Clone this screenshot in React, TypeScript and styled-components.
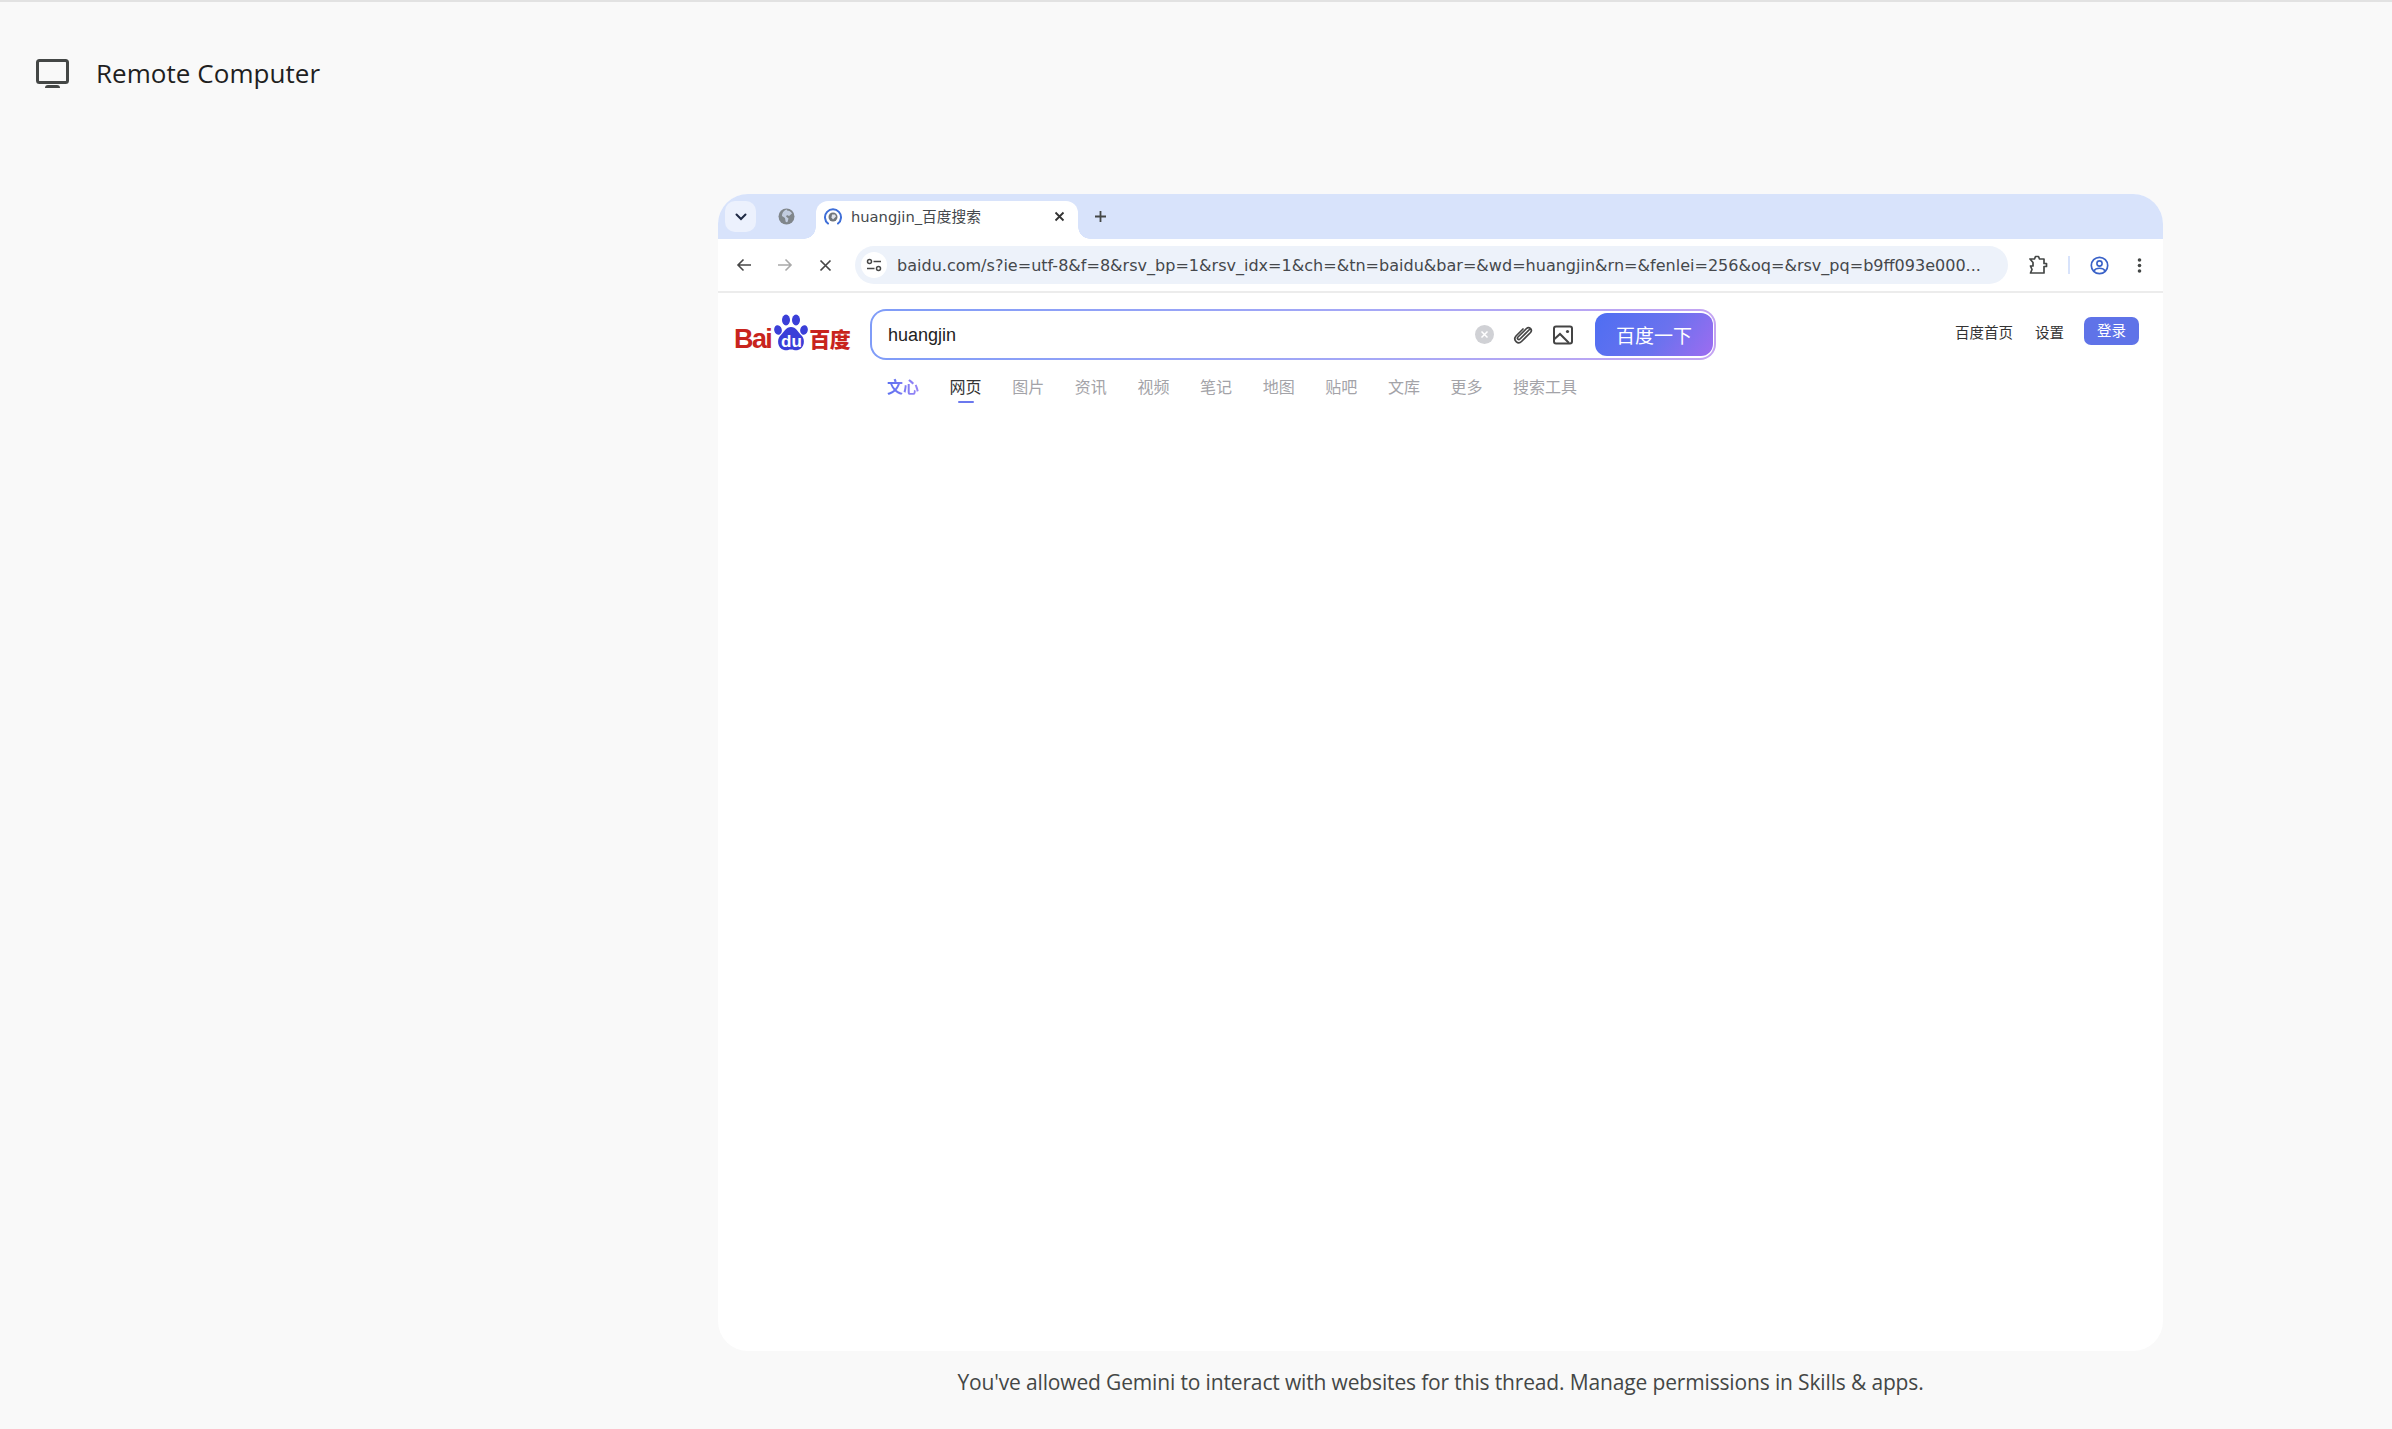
import React from "react";
import styled, { createGlobalStyle } from "styled-components";

const Global = createGlobalStyle`
  html, body { margin: 0; padding: 0; background: #f9f9f9; }
  * { box-sizing: border-box; }
`;

const CJK = `"Noto Sans CJK SC", sans-serif`;

const Page = styled.div`
  width: 2392px;
  height: 1429px;
  overflow: hidden;
  background: #f9f9f9;
  border-top: 2px solid #e2e2e2;
  display: flex;
  flex-direction: column;
`;

const Header = styled.header`
  height: 192px;
  padding: 56px 0 0 36px;
  display: flex;
  align-items: flex-start;
  gap: 27px;
`;

const HeaderIcon = styled.svg`
  width: 33px;
  height: 30px;
  flex: none;
  margin-top: 1px;
`;

const Title = styled.h1`
  margin: 0;
  font: 400 26px/30px "Open Sans", sans-serif;
  letter-spacing: 0.05px;
  color: #1f1f1f;
`;

const Stage = styled.main`
  display: flex;
  flex-direction: column;
  align-items: center;
  width: 1445px;
  margin-left: 718px;
`;

const BrowserWindow = styled.section`
  width: 1445px;
  height: 1157px;
  background: #fff;
  border-radius: 30px;
  overflow: hidden;
  display: flex;
  flex-direction: column;
`;

const TabStrip = styled.div`
  height: 45px;
  flex: none;
  background: #d8e3fb;
  padding: 7px 0 0 7px;
  display: flex;
  align-items: flex-start;
  font: 400 14px/18px "DejaVu Sans", ${CJK};
  color: #45484c;
`;

const TabListButton = styled.div`
  width: 31px;
  height: 31px;
  border-radius: 10px;
  background: #ecf1fd;
  display: flex;
  align-items: center;
  justify-content: center;
`;

const PinnedTab = styled.div`
  width: 60px;
  height: 31px;
  display: flex;
  align-items: center;
  justify-content: center;
`;

const Tab = styled.div`
  width: 262px;
  height: 38px;
  background: #fff;
  border-radius: 12px 12px 0 0;
  display: flex;
  align-items: center;
  padding: 0 0 7px 8px;
  position: relative;
  &::before, &::after {
    content: "";
    position: absolute;
    bottom: 0;
    width: 12px;
    height: 12px;
    background: radial-gradient(circle at var(--cx) 0, #d8e3fb 11.5px, #fff 12px);
  }
  &::before { left: -12px; --cx: 0; }
  &::after { right: -12px; --cx: 100%; }
`;

const TabLabel = styled.span`
  margin-left: 9px;
  width: 203px;
  flex: none;
  white-space: nowrap;
  font-size: 14.7px;
`;

const NewTab = styled.div`
  margin-left: 9px;
  width: 26px;
  height: 31px;
  display: flex;
  align-items: center;
  justify-content: center;
`;

const Toolbar = styled.div`
  height: 54px;
  flex: none;
  background: #fff;
  border-bottom: 2px solid #ececec;
  padding: 7px 0 7px 1px;
  display: flex;
  align-items: center;
  border-radius: 10px 10px 0 0;
`;

const NavButton = styled.div<{ $w: number }>`
  width: ${(p) => p.$w}px;
  height: 38px;
  flex: none;
  display: flex;
  align-items: center;
  justify-content: center;
`;

const Omnibox = styled.div`
  margin-left: 10px;
  width: 1153px;
  height: 38px;
  flex: none;
  border-radius: 19px;
  background: #edf2fa;
  display: flex;
  align-items: center;
  padding-left: 6px;
`;

const SiteChip = styled.div`
  width: 26px;
  height: 26px;
  border-radius: 50%;
  background: #fff;
  flex: none;
  display: flex;
  align-items: center;
  justify-content: center;
`;

const UrlText = styled.span`
  margin: 1px 0 0 10px;
  font: 400 16.05px/20px "DejaVu Sans", sans-serif;
  color: #45484c;
  white-space: nowrap;
`;

const ToolbarDivider = styled.div`
  width: 2px;
  height: 18px;
  background: #d8e3fb;
  flex: none;
`;

const BaiduPage = styled.div`
  flex: 1;
  padding: 16px 0 0 16px;
  display: flex;
  flex-direction: column;
`;

const TopRow = styled.div`
  display: flex;
  align-items: flex-start;
`;

const Logo = styled.div`
  width: 116px;
  height: 40px;
  margin-top: 3px;
  flex: none;
  display: flex;
  align-items: flex-end;
  color: #c8241d;
  position: relative;
`;

const LogoLatin = styled.span`
  font: 700 27px/25px "Liberation Sans", sans-serif;
  letter-spacing: -1.6px;
`;

const Paw = styled.svg`
  width: 36px;
  height: 38px;
  flex: none;
  margin-left: 2px;
`;

const PawText = styled.text`
  font: 700 17px "Liberation Sans", sans-serif;
  fill: #fff;
`;

const LogoCjk = styled.span`
  font: 900 21px/28px ${CJK};
  letter-spacing: -0.5px;
  white-space: nowrap;
`;

const SearchBox = styled.div`
  margin-left: 20px;
  width: 846px;
  height: 51px;
  flex: none;
  border-radius: 16px;
  padding: 2px;
  background: linear-gradient(90deg, #7f9cf8 0%, #a6a8f6 60%, #c4a4f2 100%);
`;

const SearchInner = styled.div`
  height: 100%;
  border-radius: 14px;
  background: #fff;
  display: flex;
  align-items: center;
  padding: 0 1px 0 16px;
`;

const Query = styled.span`
  font: 400 18px/24px "Liberation Sans", sans-serif;
  color: #222;
  width: 588px;
`;

const ClearDot = styled.div`
  width: 19px;
  height: 19px;
  border-radius: 50%;
  background: #d0d1d5;
  flex: none;
  display: flex;
  align-items: center;
  justify-content: center;
`;

const SearchIcon = styled.svg<{ $ml: number }>`
  width: 22px;
  height: 22px;
  flex: none;
  margin-left: ${(p) => p.$ml}px;
`;

const SearchButton = styled.div`
  margin-left: 21px;
  width: 118px;
  height: 43px;
  flex: none;
  border-radius: 12px;
  background: linear-gradient(125deg, #4e6ef2 0%, #6a72ee 55%, #9d6cf0 100%);
  color: #fff;
  font: 400 19px/43px ${CJK};
  text-align: center;
`;

const TopLinks = styled.div`
  margin-left: 239px;
  margin-top: 8px;
  display: flex;
  align-items: flex-start;
  font: 400 14.5px/20px ${CJK};
  color: #333;
`;

const TopLink = styled.span<{ $ml?: number }>`
  margin-left: ${(p) => p.$ml ?? 0}px;
  margin-top: 5px;
  white-space: nowrap;
`;

const LoginButton = styled.div`
  margin-left: 20px;
  width: 55px;
  height: 28px;
  border-radius: 7px;
  background: #5f73e8;
  color: #fff;
  font: 400 14.5px/26px ${CJK};
  text-align: center;
`;

const TabsRow = styled.nav`
  margin: 15px 0 0 153px;
  display: flex;
  gap: 30.6px;
  font: 400 16px/22px ${CJK};
  color: #9a9aa0;
`;

const NavItem = styled.span<{ $active?: boolean }>`
  position: relative;
  white-space: nowrap;
  color: ${(p) => (p.$active ? "#333" : "#a3a3a8")};
  &::after {
    content: "";
    display: ${(p) => (p.$active ? "block" : "none")};
    position: absolute;
    left: 8px;
    right: 8px;
    bottom: -6px;
    height: 2px;
    border-radius: 1px;
    background: #6b78ee;
  }
`;

const AiItem = styled.span`
  font-weight: 700;
  white-space: nowrap;
  background: linear-gradient(90deg, #5a6ff0, #9a86f6);
  -webkit-background-clip: text;
  background-clip: text;
  color: transparent;
`;

const Notice = styled.p`
  margin: 18px 0 0;
  font: 400 21px/26px "Open Sans", sans-serif;
  letter-spacing: -0.15px;
  color: #444746;
  white-space: nowrap;
`;

const tabs = ["图片", "资讯", "视频", "笔记", "地图", "贴吧", "文库", "更多", "搜索工具"];

export default function App() {
  return (
    <Page>
      <Global />
      <Header>
        <HeaderIcon viewBox="0 0 33 30" fill="none">
          <rect x="1.500" y="1.500" width="30" height="22" rx="2" stroke="#444746" strokeWidth="3" />
          <path d="M9 29c0-2 1-3 3-3h9c2 0 3 1 3 3z" fill="#444746" />
        </HeaderIcon>
        <Title>Remote Computer</Title>
      </Header>
      <Stage>
        <BrowserWindow>
          <TabStrip>
            <TabListButton>
              <svg width="12" height="8" viewBox="0 0 12 8" fill="none">
                <path d="M1.500 1.500 6 6l4.500-4.500" stroke="#1f2a44" strokeWidth="2" strokeLinecap="round" />
              </svg>
            </TabListButton>
            <PinnedTab>
              <svg width="17" height="17" viewBox="0 0 17 17">
                <circle cx="8.500" cy="8.500" r="8" fill="#80868b" />
                <path d="M9 2.500c2 0 4 1 5 3l-3 2.500-2-1-1 1.500 2.500 2-1 3.500c-1 .5-2 0-2-1l-.5-3-3-2c0-3 2-6 5-6.500z" fill="#d8e3fb" opacity=".75" />
              </svg>
            </PinnedTab>
            <Tab>
              <svg width="18" height="18" viewBox="0 0 18 18" fill="none" style={{ flex: "none" }}>
                <path d="M4 15.500A8 8 0 1 1 14 15.500" stroke="#3f6fd8" strokeWidth="2" strokeLinecap="round" />
                <circle cx="9" cy="9" r="4.500" fill="#70757a" />
                <path d="M8 6.500h3l1 2-3 3-1.500-2z" fill="#dfe3ea" />
              </svg>
              <TabLabel>huangjin_百度搜索</TabLabel>
              <svg width="11" height="11" viewBox="0 0 11 11" fill="none" style={{ flex: "none" }}>
                <path d="M1.500 1.500l8 8m0-8l-8 8" stroke="#333" strokeWidth="1.800" />
              </svg>
            </Tab>
            <NewTab>
              <svg width="13" height="13" viewBox="0 0 13 13" fill="none">
                <path d="M6.500 1v11M1 6.500h11" stroke="#444746" strokeWidth="1.800" />
              </svg>
            </NewTab>
          </TabStrip>
          <Toolbar>
            <NavButton $w={46}>
              <svg width="16" height="14" viewBox="0 0 16 14" fill="none" style={{ marginLeft: 4 }}>
                <path d="M15 7H2m5.500-5.500L2 7l5.500 5.500" stroke="#474747" strokeWidth="1.600" />
              </svg>
            </NavButton>
            <NavButton $w={40}>
              <svg width="16" height="14" viewBox="0 0 16 14" fill="none">
                <path d="M1 7h13M8.500 1.500 14 7l-5.500 5.500" stroke="#a9a9a9" strokeWidth="1.600" />
              </svg>
            </NavButton>
            <NavButton $w={40}>
              <svg width="13" height="13" viewBox="0 0 13 13" fill="none">
                <path d="M1.500 1.500l10 10m0-10l-10 10" stroke="#474747" strokeWidth="1.700" />
              </svg>
            </NavButton>
            <Omnibox>
              <SiteChip>
                <svg width="16" height="14" viewBox="0 0 16 14" fill="none">
                  <circle cx="3.500" cy="3.500" r="2" stroke="#474747" strokeWidth="1.500" />
                  <path d="M7.500 3.500H15M1 10.500h7.500" stroke="#474747" strokeWidth="1.500" />
                  <circle cx="12.500" cy="10.500" r="2" stroke="#474747" strokeWidth="1.500" />
                </svg>
              </SiteChip>
              <UrlText>baidu.com/s?ie=utf-8&amp;f=8&amp;rsv_bp=1&amp;rsv_idx=1&amp;ch=&amp;tn=baidu&amp;bar=&amp;wd=huangjin&amp;rn=&amp;fenlei=256&amp;oq=&amp;rsv_pq=b9ff093e000...</UrlText>
            </Omnibox>
            <NavButton $w={60}>
              <svg width="20" height="20" viewBox="0 0 20 20" fill="none">
                <path d="M2 4h4.500l1-2.500h3l1 2.500H16v4.500h2.500v3H16V18H2.500l1.500-3.500-1.500-3.500H5V7.500z" stroke="#444746" strokeWidth="1.700" strokeLinejoin="round" />
              </svg>
            </NavButton>
            <ToolbarDivider />
            <NavButton $w={58}>
              <svg width="19" height="19" viewBox="0 0 19 19" fill="none">
                <circle cx="9.500" cy="9.500" r="8.200" stroke="#3a62c8" strokeWidth="1.700" />
                <circle cx="9.500" cy="7.500" r="2.600" stroke="#3a62c8" strokeWidth="1.600" />
                <path d="M3.800 15c1.200-2 3.500-2.800 5.700-2.800s4.500.8 5.700 2.800" stroke="#3a62c8" strokeWidth="1.600" />
              </svg>
            </NavButton>
            <NavButton $w={22}>
              <svg width="5" height="15" viewBox="0 0 5 15">
                <circle cx="2.500" cy="2" r="1.800" fill="#444746" />
                <circle cx="2.500" cy="7.500" r="1.800" fill="#444746" />
                <circle cx="2.500" cy="13" r="1.800" fill="#444746" />
              </svg>
            </NavButton>
          </Toolbar>
          <BaiduPage>
            <TopRow>
              <Logo>
                <LogoLatin>Bai</LogoLatin>
                <Paw viewBox="0 0 36 38">
                  <ellipse cx="5" cy="16" rx="3.800" ry="4.800" fill="#3a3fd8" transform="rotate(-15 5 16)" />
                  <ellipse cx="13" cy="6" rx="4" ry="5.400" fill="#3a3fd8" />
                  <ellipse cx="23" cy="6" rx="4" ry="5.400" fill="#3a3fd8" />
                  <ellipse cx="31" cy="16" rx="3.800" ry="4.800" fill="#3a3fd8" transform="rotate(15 31 16)" />
                  <path d="M18 13c5 0 7 5 11 9 3 3 3 12-4 14-3 .8-4-.5-7-.5s-4 1.300-7 .5c-7-2-7-11-4-14 4-4 6-9 11-9z" fill="#3a3fd8" />
                  <PawText x="8" y="33">du</PawText>
                </Paw>
                <LogoCjk>百度</LogoCjk>
              </Logo>
              <SearchBox>
                <SearchInner>
                  <Query>huangjin</Query>
                  <ClearDot>
                    <svg width="9" height="9" viewBox="0 0 9 9" fill="none">
                      <path d="M1.500 1.500l6 6m0-6l-6 6" stroke="#fff" strokeWidth="1.500" />
                    </svg>
                  </ClearDot>
                  <SearchIcon $ml={18} viewBox="0 0 22 22" fill="none">
                    <path d="M17.500 5.500 8 15c-1.500 1.500-3.500-.5-2-2l8.500-8.500c2.500-2.500 6.500 1 4 4L9.500 17.500c-3.500 3.500-9-1.500-5.500-5.500L11 5" stroke="#444" strokeWidth="1.700" strokeLinecap="round" />
                  </SearchIcon>
                  <SearchIcon $ml={18} viewBox="0 0 22 22" fill="none">
                    <rect x="2" y="2.500" width="18" height="17" rx="2" stroke="#444" strokeWidth="2" />
                    <path d="M2.500 15l5.500-5 9 9" stroke="#444" strokeWidth="2" />
                    <circle cx="15.500" cy="7.500" r="1.600" fill="#444" />
                  </SearchIcon>
                  <SearchButton>百度一下</SearchButton>
                </SearchInner>
              </SearchBox>
              <TopLinks>
                <TopLink>百度首页</TopLink>
                <TopLink $ml={22}>设置</TopLink>
                <LoginButton>登录</LoginButton>
              </TopLinks>
            </TopRow>
            <TabsRow>
              <AiItem>文心</AiItem>
              <NavItem $active>网页</NavItem>
              {tabs.map((t) => (
                <NavItem key={t}>{t}</NavItem>
              ))}
            </TabsRow>
          </BaiduPage>
        </BrowserWindow>
        <Notice>You've allowed Gemini to interact with websites for this thread. Manage permissions in Skills &amp; apps.</Notice>
      </Stage>
    </Page>
  );
}
